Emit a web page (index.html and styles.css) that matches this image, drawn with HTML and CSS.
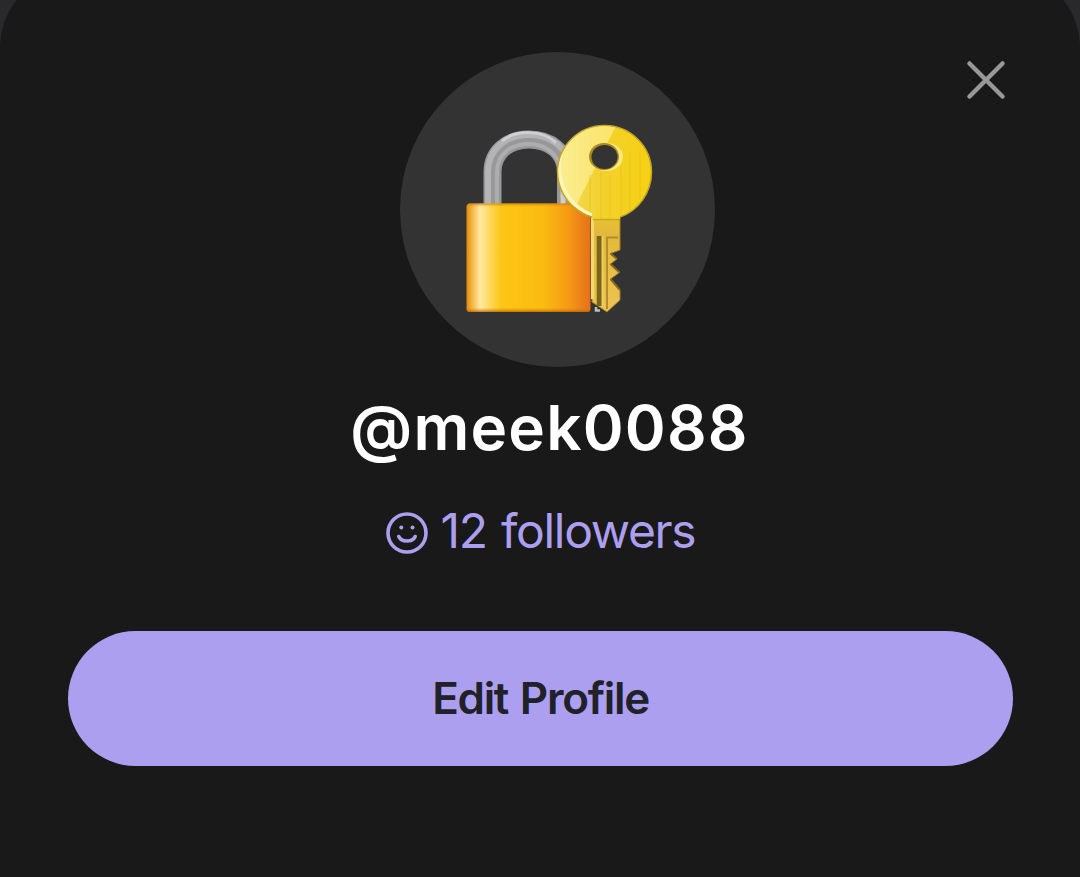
FILE: index.html
```html
<!DOCTYPE html>
<html lang="en">
<head>
  <meta charset="UTF-8">
  <meta name="viewport" content="width=device-width, initial-scale=1.0">
  <title>@meek0088</title>
  <link rel="stylesheet" href="styles.css">
</head>
<body>
  <main class="sheet">
    <button class="close" type="button" aria-label="Close">
      <svg viewBox="0 0 40 40"><path d="M3.5 3.5L36.5 36.5M36.5 3.5L3.5 36.5"/></svg>
    </button>

    <div class="avatar">
      <svg class="lock-key" viewBox="0 0 220 220" aria-hidden="true">
        <defs>
          <linearGradient id="body" x1="0" x2="1" y1="0" y2="0">
            <stop offset="0" stop-color="#e08a0f"/>
            <stop offset=".04" stop-color="#f3b13c"/>
            <stop offset=".11" stop-color="#fee9a4"/>
            <stop offset=".17" stop-color="#fddc6c"/>
            <stop offset=".28" stop-color="#fbc614"/>
            <stop offset=".62" stop-color="#fbbb12"/>
            <stop offset=".82" stop-color="#f59a14"/>
            <stop offset="1" stop-color="#e5701b"/>
          </linearGradient>
          <linearGradient id="bodyEdge" x1="0" x2="0" y1="0" y2="1">
            <stop offset="0" stop-color="#c97800" stop-opacity=".75"/>
            <stop offset=".03" stop-color="#e08c00" stop-opacity="0"/>
            <stop offset=".96" stop-color="#e08c00" stop-opacity="0"/>
            <stop offset="1" stop-color="#b85a00" stop-opacity=".8"/>
          </linearGradient>
          <linearGradient id="head" x1="0" x2="1" y1="0" y2="0">
            <stop offset="0" stop-color="#f0da5c"/>
            <stop offset=".5" stop-color="#f3d12c"/>
            <stop offset="1" stop-color="#f6d012"/>
          </linearGradient>
          <linearGradient id="shine" x1="0" x2="1" y1="0" y2="0">
            <stop offset="0" stop-color="#fdf3a4"/>
            <stop offset="1" stop-color="#fce775"/>
          </linearGradient>
          <linearGradient id="blade" x1="0" x2="0" y1="0" y2="1">
            <stop offset="0" stop-color="#e8c32c"/>
            <stop offset=".2" stop-color="#e2b93c"/>
            <stop offset="1" stop-color="#eec352"/>
          </linearGradient>
          <clipPath id="headClip"><circle cx="154.500" cy="62" r="46"/></clipPath>
        </defs>

        <!-- shackle -->
        <g fill="none">
          <path d="M42.500 96V62C42.500 42 58 29.500 79 29.500S116 42 116 62V96" stroke="#98989a" stroke-width="18"/>
          <path d="M38 95V62C38 39 56 25 79 25C98 25 112 34 118 49" stroke="#b4b4b6" stroke-width="6"/>
          <path d="M47 95V62C47 44 61 34 79 34C93 34 104 41 109 53" stroke="#adadaf" stroke-width="4"/>
          <path d="M52 31C65 20 93 19 106 33" stroke="#cfcfd1" stroke-width="3"/>
          <path d="M113 75V96" stroke="#cfcfd1" stroke-width="5"/>
        </g>

        <rect x="16.500" y="93.500" width="124" height="108.500" rx="3.500" fill="url(#body)"/>
        <rect x="16.500" y="93.500" width="124" height="108.500" rx="3.500" fill="url(#bodyEdge)"/>

        <!-- blade -->
        <path d="M141 104H170V140L160.500 143.500L167 149L160.500 154L169.500 162.500L160.500 169L170 180V190L157 202L142 192Z" fill="url(#blade)" stroke="#9c8121" stroke-width="1"/>
        <path d="M146 197V200.500H150" stroke="#bdbdbd" stroke-width="2.500" fill="none"/>
        <path d="M142.500 107V189" stroke="#f3d970" stroke-width="3"/>
        <path d="M149.200 126V196" stroke="#79661a" stroke-width="5"/>
        <path d="M157 199V127.500H168" fill="none" stroke="#b28d28" stroke-width="2"/>
        <path d="M152.500 126V197" stroke="#efd166" stroke-width="1.500"/>
        <path d="M160.500 143.500L167 149M160.500 154L169.500 162.500M160.500 169L170 180" stroke="#80681f" stroke-width="2"/>

        <!-- key head, with a round hole -->
        <path d="M154.500 15.500C180 15.500 201.500 36 201.500 62C201.500 83 188 101 170 107V109H142V107C121 101 107.500 82 107.500 62C107.500 36 129 15.500 154.500 15.500Z" fill="url(#head)"/>
        <path d="M142 107C121 101 107.500 82 107.500 62C107.500 36 129 15.500 154.500 15.500C180 15.500 201.500 36 201.500 62C201.500 83 188 101 170 107" fill="none" stroke="#c0a428" stroke-width="1.500"/>
        <path d="M143 109.500H169" stroke="#c9a81f" stroke-width="1.500"/>
        <g clip-path="url(#headClip)">
          <path d="M168 12L126 96L100 112V12Z" fill="url(#shine)" opacity=".82"/>
          <path d="M140 65V108M151 62V110M160 65V110M171 55V105M180 43V100M190 40V90" stroke="#e3bd17" stroke-width="2" opacity=".3"/>
          <path d="M111 44C104 76 123 98 142 105" fill="none" stroke="#fff6bd" stroke-width="3"/>
        </g>
        <ellipse cx="156.500" cy="47" rx="16.500" ry="14" fill="#fbe87c"/>
        <ellipse cx="154" cy="46.500" rx="15" ry="13.500" fill="#a88a20"/>
        <ellipse cx="154.500" cy="47" rx="13" ry="12" fill="#333"/>
      </svg>
    </div>

    <h1 class="username">@meek0088</h1>

    <div class="followers">
      <svg class="smile" viewBox="0 0 42 42" aria-hidden="true">
        <circle class="line" cx="21" cy="21" r="19"/>
        <circle cx="15.300" cy="15.500" r="2"/>
        <circle cx="26.500" cy="15.500" r="2"/>
        <path class="line" d="M12.800 24.500C15.500 30.500 26.500 30.500 29.200 24.500"/>
      </svg>
      <span>12 followers</span>
    </div>

    <button class="edit" type="button">Edit Profile</button>
  </main>
</body>
</html>
```

FILE: styles.css
```css
:root {
  --accent: #ac9ff0;
  --surface: #191919;
}
* {
  box-sizing: border-box;
}
body {
  margin: 0;
  height: 877px;
  overflow: hidden;
  background-color: #29292b;
  font-family: Inter, 'Liberation Sans', sans-serif;
}
/* the top edge of the sheet runs off screen, only the lower part of the corners shows */
.sheet {
  position: relative;
  display: flex;
  flex-direction: column;
  align-items: center;
  height: 907px;
  margin-top: -30px;
  padding: 82px 67px 0 68px;
  background-color: var(--surface);
  border-radius: 78px 78px 0 0;
}
.close {
  position: absolute;
  top: 90px;
  right: 74.5px;
  width: 40px;
  height: 40px;
  padding: 0;
  border: none;
  background: none;
  cursor: pointer;
}
.close svg {
  display: block;
  fill: none;
  stroke: #989898;
  stroke-width: 4.5;
  stroke-linecap: round;
}
.avatar {
  display: flex;
  align-items: center;
  justify-content: center;
  width: 315px;
  height: 315px;
  margin-left: 34px;
  border-radius: 50%;
  background-color: #333333;
}
.lock-key {
  width: 220px;
  height: 220px;
  margin: 21px 0 0 5px;
}
.username {
  margin: 26px 0 0 18px;
  font-size: 62px;
  font-weight: 600;
  line-height: 70px;
  letter-spacing: 1.2px;
  color: #ffffff;
}
.followers {
  display: flex;
  align-items: center;
  gap: 13px;
  height: 60px;
  margin-top: 37px;
  font-size: 48px;
  letter-spacing: -1.3px;
  word-spacing: 2px;
  color: var(--accent);
}
.smile {
  width: 42px;
  height: 42px;
  margin-top: 6px;
  fill: currentColor;
}
.smile .line {
  fill: none;
  stroke: currentColor;
  stroke-width: 3.6;
  stroke-linecap: round;
}
.edit {
  align-self: stretch;
  height: 135px;
  margin-top: 71px;
  padding: 0 0 2px;
  border: none;
  border-radius: 68px;
  background-color: var(--accent);
  font-family: inherit;
  font-size: 44px;
  font-weight: 600;
  letter-spacing: -1.3px;
  word-spacing: 2px;
  color: #212129;
  cursor: pointer;
}
```
